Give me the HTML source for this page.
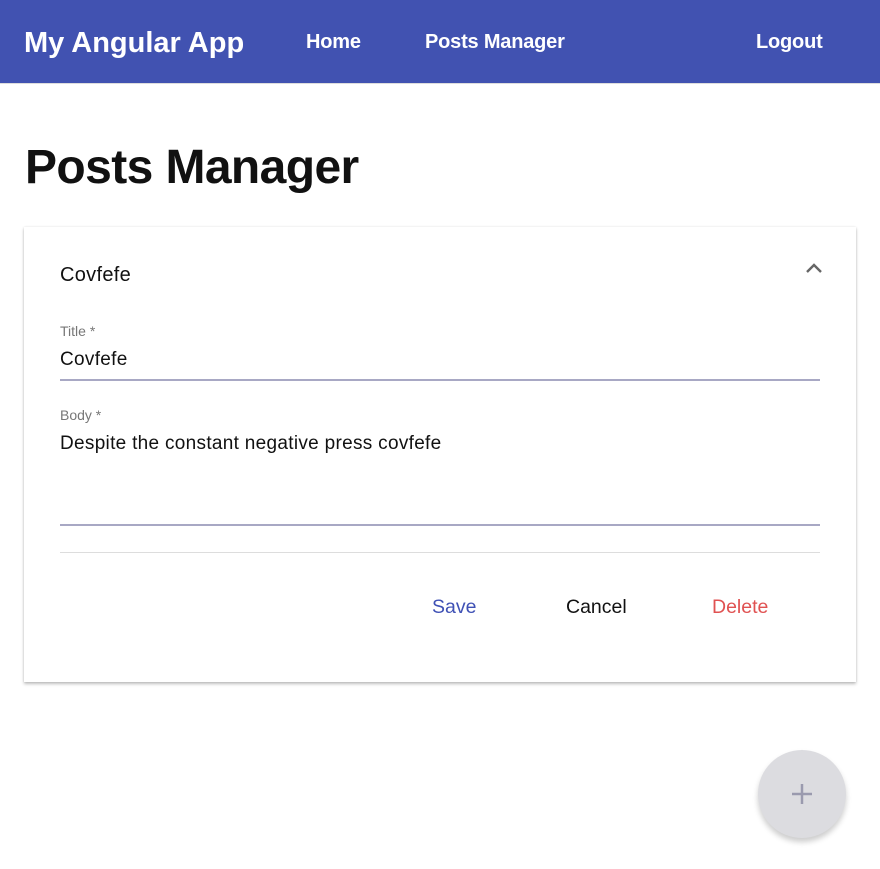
<!DOCTYPE html>
<html><head><style>
body{margin:0;width:880px;height:869px;background:#fff;font-family:"Liberation Sans",Arial,sans-serif;position:relative;overflow:hidden}
.bar{position:absolute;left:0;top:0;width:880px;height:83px;background:#4152b1;color:#fff;border-bottom:1px solid #ddd}
.bar span{position:absolute;font-weight:bold;top:31px;font-size:20px;letter-spacing:-0.2px}
h1{position:absolute;left:25px;top:140px;margin:0;font-size:48px;letter-spacing:-0.6px;color:#111}
.card{position:absolute;left:24px;top:227px;width:832px;height:455px;background:#fff;box-shadow:0 2px 3px rgba(0,0,0,.25),0 0 2px rgba(0,0,0,.1)}
.t{position:absolute;color:#111}
.lbl{position:absolute;left:36px;font-size:14px;color:#777}
.line{position:absolute;left:36px;width:760px}
.fab{position:absolute;left:758px;top:750px;width:88px;height:88px;border-radius:50%;background:#dcdce0;box-shadow:0 4px 6px rgba(0,0,0,.2)}
</style></head><body>
<div class="bar">
<span style="left:24px;top:27px;font-size:29px;font-weight:bold;letter-spacing:0">My Angular App</span>
<span style="left:306px">Home</span>
<span style="left:425px">Posts Manager</span>
<span style="left:756px">Logout</span>
</div>
<h1>Posts Manager</h1>
<div class="card">
<div class="t" style="left:36px;top:37px;font-size:20px;letter-spacing:0.3px">Covfefe</div>
<svg style="position:absolute;left:780px;top:35px" width="20" height="14"><path d="M3 10 L10 3 L17 10" fill="none" stroke="#666" stroke-width="2.4"/></svg>
<div class="lbl" style="top:96px">Title *</div>
<div class="t" style="left:36px;top:122px;font-size:19px;letter-spacing:0.3px">Covfefe</div>
<div class="line" style="top:152px;border-top:2px solid #a8a8c4"></div>
<div class="lbl" style="top:180px">Body *</div>
<div class="t" style="left:36px;top:206px;font-size:19px;letter-spacing:0.3px">Despite the constant negative press covfefe</div>
<div class="line" style="top:297px;border-top:2px solid #a8a8c4"></div>
<div class="line" style="top:325px;border-top:1px solid #ddd"></div>
<div class="t" style="left:408px;top:369px;font-size:19.5px;color:#3f51b5">Save</div>
<div class="t" style="left:542px;top:369px;font-size:19.5px">Cancel</div>
<div class="t" style="left:688px;top:369px;font-size:19.5px;color:#e05252">Delete</div>
</div>
<div class="fab"><svg width="88" height="88"><path d="M44 34V54M34 44H54" stroke="#9a9aae" stroke-width="2.5"/></svg></div>
</body></html>
